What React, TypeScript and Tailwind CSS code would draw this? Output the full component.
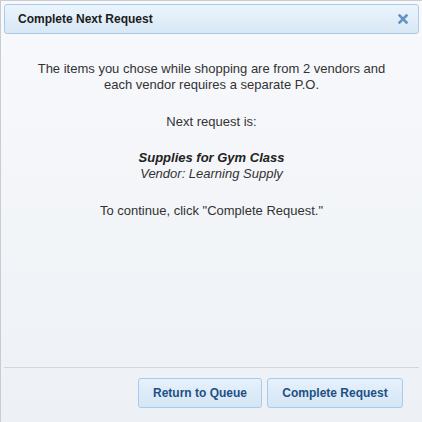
import React from "react";

export default function App() {
  return (
    <div
      className="w-[422px] h-[422px] flex flex-col border-t border-l border-[#c9ccd0] bg-gradient-to-b from-[#f8f9fc] to-[#edf1f5] text-[12px] text-[#333]"
      style={{ fontFamily: '"Liberation Sans", Arial, sans-serif' }}
    >
      <div className="mx-[3px] mt-[3px] h-[30px] flex items-center justify-between rounded-[3px] border border-[#a9cbe9] bg-gradient-to-b from-[#ebf4fc] to-[#d8e8f6] pl-[13px] pr-[10px]">
        <span className="font-bold text-[12px] text-[#1c1c1c]">Complete Next Request</span>
        <svg width="10" height="10" viewBox="0 0 10 10">
          <path d="M1.5 1.5 L8.5 8.5 M8.5 1.5 L1.5 8.5" stroke="#6592c4" strokeWidth="2.6" strokeLinecap="square" />
        </svg>
      </div>
      <div className="flex-1 flex flex-col items-center text-center pt-[27px] leading-[16px] text-[13px]">
        <p>The items you chose while shopping are from 2 vendors and</p>
        <p>each vendor requires a separate P.O.</p>
        <p className="mt-[21px]">Next request is:</p>
        <p className="mt-[20px] font-bold italic text-[#222]">Supplies for Gym Class</p>
        <p className="italic">Vendor: Learning Supply</p>
        <p className="mt-[21px]">To continue, click "Complete Request."</p>
      </div>
      <div className="mx-[3px] border-t border-[#d3d6da] h-[55px] flex items-start justify-end gap-[5px] pt-[10px] pr-[16px]">
        <button className="h-[30px] w-[124px] rounded-[3px] border border-[#a9cbe9] bg-gradient-to-b from-[#e6f1fb] to-[#d4e6f6] font-bold text-[12px] text-[#1f4f85]">
          Return to Queue
        </button>
        <button className="h-[30px] w-[136px] rounded-[3px] border border-[#a9cbe9] bg-gradient-to-b from-[#e6f1fb] to-[#d4e6f6] font-bold text-[12px] text-[#1f4f85]">
          Complete Request
        </button>
      </div>
    </div>
  );
}
